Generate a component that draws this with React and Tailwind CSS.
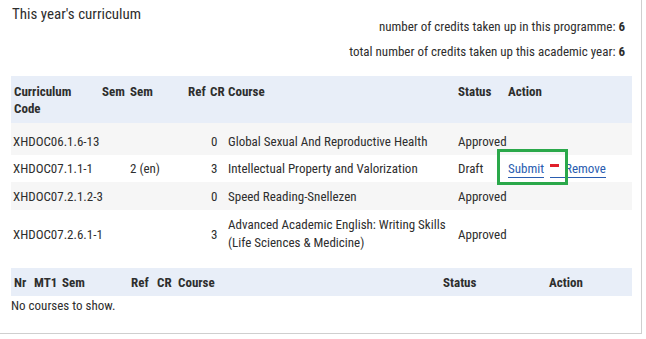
import React from "react";

function Link({ children }) {
  return (
    <span className="inline-block leading-[16px] text-[#2a5db0] border-b border-[#2a5db0]">{children}</span>
  );
}

export default function App() {
  return (
    <div className="relative w-[646px] h-[339px] bg-white text-[#2e2e2e] text-[13px] leading-[17px] font-['Roboto_Condensed','Open_Sans_Condensed','Liberation_Sans',sans-serif]">
      <div className="w-[642px] h-[334px] border-r border-b border-[#cfcfcf] px-[11px]">
        <div className="flex justify-between">
          <div className="pt-[5px] pl-[1px] text-[15px] leading-[18px]">This year's curriculum</div>
          <div className="pt-[18px] pr-[5px] text-right flex flex-col gap-[8px]">
            <div>
              number of credits taken up in this programme: <b>6</b>
            </div>
            <div>
              total number of credits taken up this academic year: <b>6</b>
            </div>
          </div>
        </div>

        <table className="mt-[16px] w-[621px] table-fixed border-collapse">
          <colgroup>
            <col className="w-[88px]" />
            <col className="w-[28px]" />
            <col className="w-[58px]" />
            <col className="w-[22px]" />
            <col className="w-[18px]" />
            <col className="w-[230px]" />
            <col className="w-[50px]" />
            <col className="w-[127px]" />
          </colgroup>
          <thead>
            <tr className="bg-[#e8eef8] text-left align-top font-bold">
              <th className="pl-[3px] pt-[7px] pb-[6px]">
                Curriculum
                <br />
                Code
              </th>
              <th className="pl-[3px] pt-[7px]">Sem</th>
              <th className="pl-[3px] pt-[7px]">Sem</th>
              <th className="pl-[3px] pt-[7px]">Ref</th>
              <th className="pl-[3px] pt-[7px]">CR</th>
              <th className="pl-[3px] pt-[7px]">Course</th>
              <th className="pl-[3px] pt-[7px]">Status</th>
              <th className="pl-[3px] pt-[7px]">Action</th>
            </tr>
          </thead>
          <tbody>
            <tr className="bg-[#f6f6f6] h-[32px]">
              <td className="pl-[2px] pt-[4px] whitespace-nowrap">XHDOC06.1.6-13</td>
              <td></td>
              <td></td>
              <td></td>
              <td className="pl-[4px] pt-[4px]">0</td>
              <td className="pl-[3px] pt-[4px]">Global Sexual And Reproductive Health</td>
              <td className="pl-[3px] pt-[4px]">Approved</td>
              <td></td>
            </tr>
            <tr className="h-[27px]">
              <td className="pl-[2px] whitespace-nowrap">XHDOC07.1.1-1</td>
              <td></td>
              <td className="pl-[3px]">2 (en)</td>
              <td></td>
              <td className="pl-[4px]">3</td>
              <td className="pl-[3px]">Intellectual Property and Valorization</td>
              <td className="pl-[3px]">Draft</td>
              <td className="pl-[3px] whitespace-nowrap">
                <Link>Submit</Link>
                <span className="inline-block w-[6px]"></span>
                <Link>
                  <span className="inline-block w-[9px] h-[3px] bg-[#e0202a] mr-[6px] align-[6px]"></span>
                  Remove
                </Link>
              </td>
            </tr>
            <tr className="bg-[#f6f6f6] h-[28px]">
              <td className="pl-[2px] whitespace-nowrap">XHDOC07.2.1.2-3</td>
              <td></td>
              <td></td>
              <td></td>
              <td className="pl-[4px]">0</td>
              <td className="pl-[3px]">Speed Reading-Snellezen</td>
              <td className="pl-[3px]">Approved</td>
              <td></td>
            </tr>
            <tr className="h-[48px]">
              <td className="pl-[2px] whitespace-nowrap">XHDOC07.2.6.1-1</td>
              <td></td>
              <td></td>
              <td></td>
              <td className="pl-[4px]">3</td>
              <td className="pl-[3px] leading-[18px]">
                Advanced Academic English: Writing Skills
                <br />
                (Life Sciences &amp; Medicine)
              </td>
              <td className="pl-[3px]">Approved</td>
              <td></td>
            </tr>
          </tbody>
        </table>

        <table className="mt-[10px] w-[621px] table-fixed border-collapse">
          <colgroup>
            <col className="w-[20px]" />
            <col className="w-[28px]" />
            <col className="w-[69px]" />
            <col className="w-[26px]" />
            <col className="w-[21px]" />
            <col className="w-[265px]" />
            <col className="w-[106px]" />
            <col className="w-[86px]" />
          </colgroup>
          <thead>
            <tr className="bg-[#e8eef8] text-left font-bold h-[28px]">
              <th className="pl-[3px]">Nr</th>
              <th className="pl-[3px]">MT1</th>
              <th className="pl-[3px]">Sem</th>
              <th className="pl-[3px]">Ref</th>
              <th className="pl-[3px]">CR</th>
              <th className="pl-[3px]">Course</th>
              <th className="pl-[3px]">Status</th>
              <th className="pl-[3px]">Action</th>
            </tr>
          </thead>
        </table>
        <div className="pt-[1px]">No courses to show.</div>
      </div>

      <div className="absolute left-[497px] top-[149px] w-[71px] h-[36px] border-[3px] border-[#2aa84a]"></div>
    </div>
  );
}
